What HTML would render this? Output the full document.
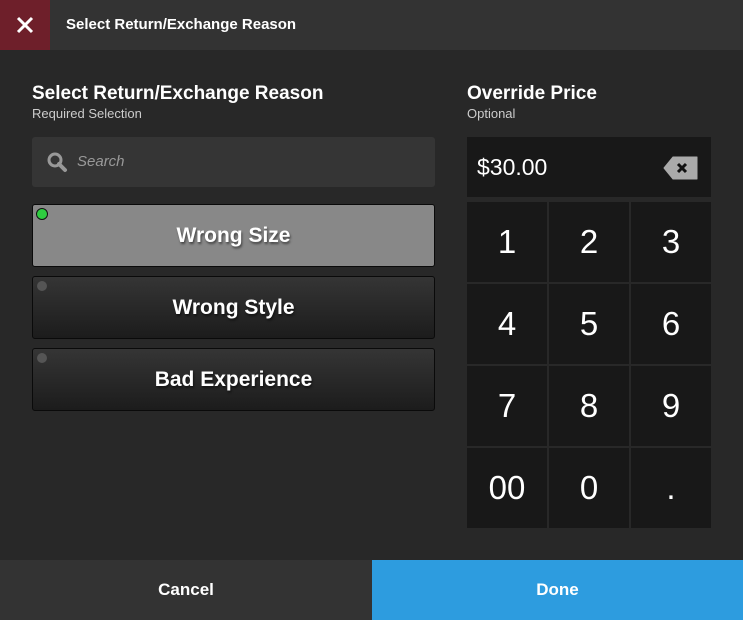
<html><head><style>
body{margin:0;width:743px;height:620px;background:#282828;font-family:"Liberation Sans",sans-serif;position:relative;overflow:hidden;color:#fff}
.a{position:absolute}
.btn{position:absolute;left:32px;width:401px;height:61px;border:1px solid #0a0a0a;border-radius:3px;background:linear-gradient(#353535,#1c1c1c);font-size:21px;font-weight:bold;text-align:center;line-height:62px;text-shadow:1px 2px 2px rgba(0,0,0,.5)}
.dot{position:absolute;left:4px;top:4px;width:10px;height:10px;border-radius:50%;background:#555}
.k{position:absolute;width:80px;height:80px;background:#181818;font-size:33px;text-align:center;line-height:80px}
</style></head><body>
<div class="a" style="left:0;top:0;width:743px;height:50px;background:#333"></div>
<div class="a" style="left:0;top:0;width:50px;height:50px;background:#6e1f2a"><svg width="50" height="50"><path d="M18 18L32 32M32 18L18 32" stroke="#fff" stroke-width="3"/></svg></div>
<div class="a" style="left:66px;top:16px;font-size:15px;font-weight:bold">Select Return/Exchange Reason</div>
<div class="a" style="left:32px;top:83px;font-size:19px;font-weight:bold">Select Return/Exchange Reason</div>
<div class="a" style="left:32px;top:106px;font-size:13px;color:#ccc">Required Selection</div>
<div class="a" style="left:32px;top:137px;width:403px;height:50px;background:#353535;border-radius:3px"><svg class="a" style="left:14px;top:14px" width="22" height="22"><circle cx="9" cy="9" r="6" stroke="#999" stroke-width="3" fill="none"/><path d="M13 13L19 19" stroke="#999" stroke-width="4" stroke-linecap="round"/></svg><span class="a" style="left:45px;top:16px;font-size:15px;font-style:italic;color:#999">Search</span></div>
<div class="btn" style="top:204px;background:#888"><div class="dot" style="background:#2ecc40;border:1px solid #111;left:3px;top:3px"></div>Wrong Size</div>
<div class="btn" style="top:276px"><div class="dot"></div>Wrong Style</div>
<div class="btn" style="top:348px"><div class="dot"></div>Bad Experience</div>
<div class="a" style="left:467px;top:83px;font-size:19px;font-weight:bold">Override Price</div>
<div class="a" style="left:467px;top:106px;font-size:13px;color:#ccc">Optional</div>
<div class="a" style="left:467px;top:137px;width:244px;height:60px;background:#181818"><span class="a" style="left:10px;top:17px;font-size:23px">$30.00</span><svg class="a" style="left:196px;top:19px" width="36" height="24"><path d="M10 1H34V23H10L1 12Z" fill="#aaa" stroke="#aaa" stroke-linejoin="round"/><path d="M15 8L23 16M23 8L15 16" stroke="#111" stroke-width="3"/></svg></div>
<div class="k" style="left:467px;top:202px">1</div><div class="k" style="left:549px;top:202px">2</div><div class="k" style="left:631px;top:202px">3</div>
<div class="k" style="left:467px;top:284px">4</div><div class="k" style="left:549px;top:284px">5</div><div class="k" style="left:631px;top:284px">6</div>
<div class="k" style="left:467px;top:366px">7</div><div class="k" style="left:549px;top:366px">8</div><div class="k" style="left:631px;top:366px">9</div>
<div class="k" style="left:467px;top:448px">00</div><div class="k" style="left:549px;top:448px">0</div><div class="k" style="left:631px;top:448px">.</div>
<div class="a" style="left:0;top:560px;width:372px;height:60px;background:#333;font-size:17px;font-weight:bold;text-align:center;line-height:60px">Cancel</div>
<div class="a" style="left:372px;top:560px;width:371px;height:60px;background:#2d9cdf;font-size:17px;font-weight:bold;text-align:center;line-height:60px">Done</div>
</body></html>
